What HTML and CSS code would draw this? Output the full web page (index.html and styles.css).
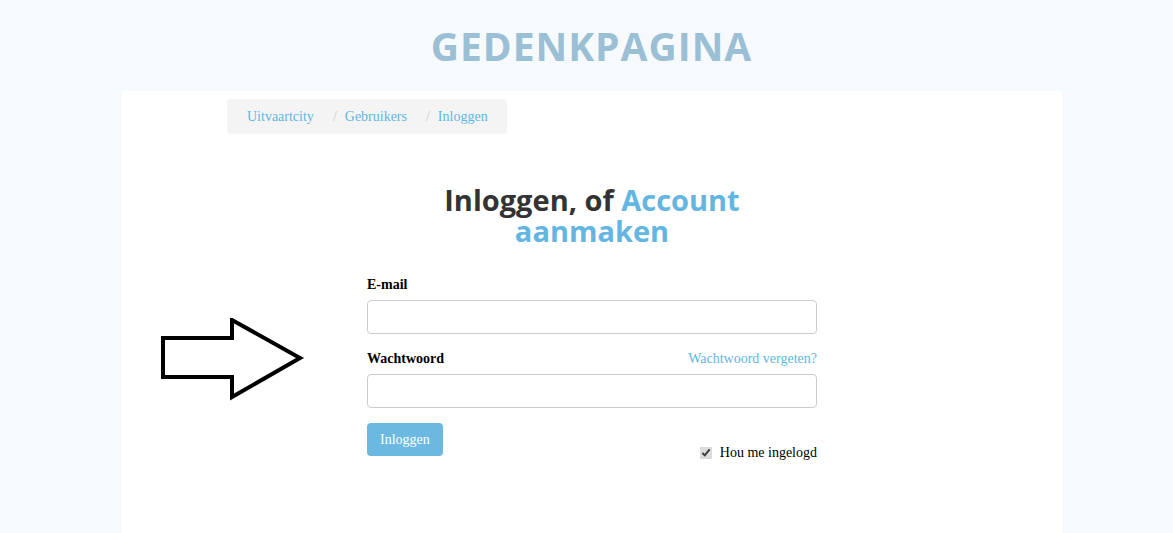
FILE: index.html
```html
<!DOCTYPE html>
<html lang="nl">
<head>
<meta charset="UTF-8">
<meta name="viewport" content="width=device-width, initial-scale=1.0">
<title>Inloggen - Gedenkpagina</title>
<link rel="stylesheet" href="styles.css">
</head>
<body>

<header class="site-header">
    <h1 class="site-title">GEDENKPAGINA</h1>
</header>

<div class="panel">
    <ul class="breadcrumb">
        <li><a href="#">Uitvaartcity</a></li>
        <li><span class="sep">/</span><a href="#">Gebruikers</a></li>
        <li><span class="sep">/</span><a href="#">Inloggen</a></li>
    </ul>

    <!-- Pointer arrow drawn over the page -->
    <svg class="arrow" width="150" height="90" viewBox="0 0 150 90">
        <polygon points="3,20 72,20 72,2 140,40 72,79 72,59 3,59" fill="#fff" stroke="#000" stroke-width="4" stroke-linejoin="miter"/>
    </svg>

    <h2 class="login-title">Inloggen, of <a href="#">Account aanmaken</a></h2>

    <form class="login-form">
        <label class="field-label" for="email">E-mail</label>
        <input type="text" id="email" class="field-input">

        <div class="label-row">
            <label class="field-label" for="password">Wachtwoord</label>
            <a href="#" class="forgot">Wachtwoord vergeten?</a>
        </div>
        <input type="password" id="password" class="field-input">

        <div class="form-actions">
            <button type="button" class="btn-login">Inloggen</button>
            <label class="remember"><input type="checkbox" checked> Hou me ingelogd</label>
        </div>
    </form>
</div>

</body>
</html>
```

FILE: styles.css
```css
body {
    margin: 0;
    padding: 0;
    background-color: #f7fafd;
    font-family: "Liberation Serif", "Times New Roman", serif;
    font-size: 14px;
    color: #000;
}

a {
    color: #62b6e1;
    text-decoration: none;
}

/* Header */
.site-header {
    height: 91px;
    display: flex;
    justify-content: center;
    align-items: center;
}

.site-title {
    margin: 0;
    padding-left: 10px;
    font-family: "Open Sans", sans-serif;
    font-weight: 700;
    font-size: 39px;
    letter-spacing: 1px;
    color: #9bbfd4;
}

/* White content panel */
.panel {
    position: relative;
    width: 940px;
    height: 442px;
    margin: 0 0 0 122px;
    background-color: #fff;
    padding-top: 8px;
    box-sizing: border-box;
}

.breadcrumb {
    list-style: none;
    margin: 0 0 0 105px;
    padding: 8px 20px;
    width: 280px;
    box-sizing: border-box;
    height: 35px;
    background-color: #f4f4f4;
    border-radius: 4px;
    display: flex;
    align-items: center;
    gap: 19px;
}

.breadcrumb .sep {
    color: #ccc;
    margin-right: 8px;
}

.arrow {
    position: absolute;
    left: 38px;
    top: 227px;
}

.login-title {
    width: 330px;
    margin: 50px auto 0;
    text-align: center;
    font-family: "Open Sans", sans-serif;
    font-weight: 700;
    font-size: 29px;
    line-height: 31px;
    color: #333;
}

.login-form {
    width: 450px;
    margin: 29px auto 0;
    display: flex;
    flex-direction: column;
}

.field-label {
    font-weight: 700;
    line-height: 20px;
}

.label-row {
    display: flex;
    justify-content: space-between;
    align-items: center;
}

.forgot {
    line-height: 20px;
}

.field-input {
    height: 34px;
    margin: 5px 0 15px;
    border: 1px solid #ccc;
    border-radius: 4px;
    box-sizing: border-box;
    padding: 6px 12px;
    font-size: 14px;
}

.field-input:focus {
    outline: none;
    border-color: #66afe9;
}

.form-actions {
    display: flex;
    justify-content: space-between;
    align-items: flex-start;
}

.btn-login {
    height: 33px;
    padding: 0 13px;
    border: none;
    border-radius: 4px;
    background-color: #6bb9e1;
    color: #fff;
    font-family: "Liberation Serif", "Times New Roman", serif;
    font-size: 14px;
    cursor: pointer;
}

.remember {
    display: flex;
    align-items: center;
    margin-top: 22px;
    line-height: 16px;
}

.remember input {
    width: 12px;
    height: 12px;
    margin: 0 8px 0 0;
    accent-color: #dcdcdc;
}
```
